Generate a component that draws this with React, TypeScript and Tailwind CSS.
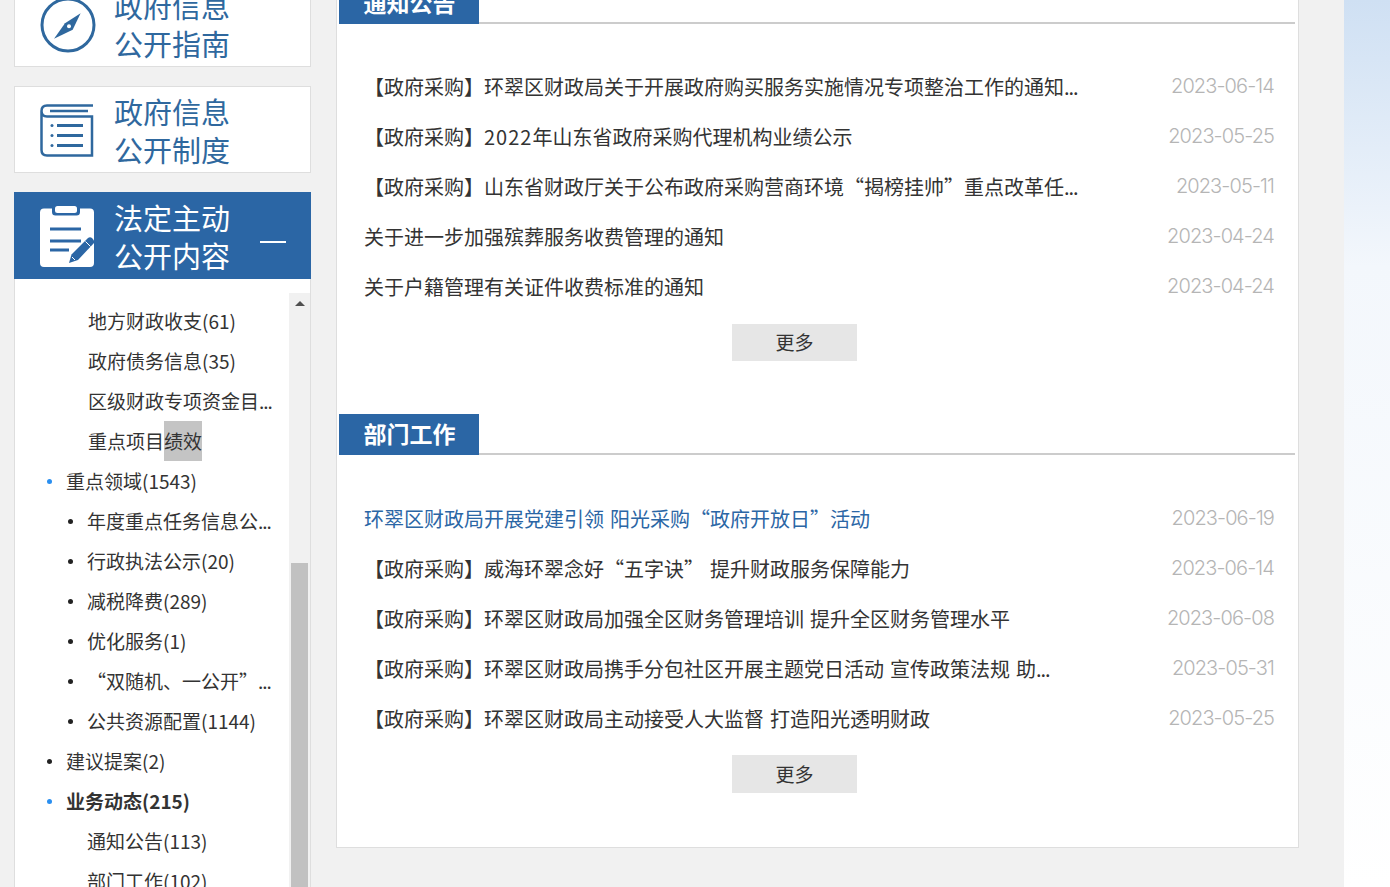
import React from 'react';

const cjk = "font-['Noto_Sans_CJK_SC','Noto_Sans',sans-serif]";

function CompassIcon() {
  return (
    <svg width="56" height="56" viewBox="0 0 56 56" className="shrink-0 mt-[2px]">
      <circle cx="28" cy="28" r="26" fill="none" stroke="#2f689e" strokeWidth="3" />
      <path d="M40.600 16.200 L32.700 32.800 L14 41.800 L25 26.200 Z" fill="#2f689e" />
      <circle cx="29" cy="29.200" r="2" fill="#fff" />
    </svg>
  );
}

function ListBookIcon() {
  return (
    <svg width="54" height="54" viewBox="0 0 54 54" className="shrink-0 mt-[2px]">
      <path d="M53 1.500 H7 Q1.500 1.500 1.500 7 V46 Q1.500 51.500 7 51.500 H52 V12.500 H7 Q1.500 12.500 1.500 7" fill="none" stroke="#2f689e" strokeWidth="2.500" />
      <path d="M10 7 H48" stroke="#2f689e" strokeWidth="2.500" />
      <path d="M17 21.500 H43 M17 31.500 H43 M17 41.500 H43" stroke="#2f689e" strokeWidth="3" />
      <circle cx="12" cy="21.500" r="1.500" fill="#2f689e" />
      <circle cx="12" cy="31.500" r="1.500" fill="#2f689e" />
      <circle cx="12" cy="41.500" r="1.500" fill="#2f689e" />
    </svg>
  );
}

function ClipboardIcon() {
  return (
    <svg width="54" height="62" viewBox="0 0 54 62" className="shrink-0 mt-[3px]">
      <path d="M4 2.500 H12 V6 Q12 9.500 15.500 9.500 H36.500 Q40 9.500 40 6 V2.500 H50 Q54 2.500 54 6.500 V57 Q54 61 50 61 H4 Q0 61 0 57 V6.500 Q0 2.500 4 2.500 Z" fill="#fff" />
      <rect x="15" y="0" width="22" height="7" rx="2.500" fill="#fff" />
      <path d="M10 23 H41 M10 35 H41 M10 44 H29" stroke="#2b66a5" strokeWidth="3" />
      <path d="M29 57 L31.500 48.500 L48 32 Q50 30.500 52 32 L54 34.500 V37 L38 54 Z" fill="#2b66a5" />
      <path d="M45.500 35.500 L50.500 40.500" stroke="#fff" strokeWidth="1" />
      <path d="M32 51 L35 54" stroke="#fff" strokeWidth="1" />
    </svg>
  );
}

function NavCard({ icon, lines, active, trailing }: { icon: React.ReactNode; lines: string[]; active?: boolean; trailing?: boolean }) {
  return (
    <div
      className={
        active
          ? 'h-[87px] flex items-center pl-[26px] bg-[#2b66a5] text-white'
          : 'h-[87px] flex items-center pl-[25px] bg-white border border-[#dedede] text-[#2f689e]'
      }
    >
      <div className="w-[55px] flex">{icon}</div>
      <div className="ml-[19px] text-[29px] leading-[38px]">
        {lines.map((l) => (
          <div key={l}>{l}</div>
        ))}
      </div>
      {trailing && <div className="ml-auto mr-[25px] mt-[12px] w-[26px] h-[2px] bg-white" />}
    </div>
  );
}

// the cut-off marker is a bit narrower in the original font
const More = () => <span className="tracking-[-1px]">...</span>;

type Row = { text: React.ReactNode; level: 1 | 2; dot?: 'blue' | 'black'; bold?: boolean; indent?: boolean };

const treeRows: Row[] = [
  { text: '地方财政收支(61)', level: 2, indent: true },
  { text: '政府债务信息(35)', level: 2, indent: true },
  { text: <>区级财政专项资金目<More /></>, level: 2, indent: true },
  {
    text: (
      <>
        重点项目<span className="inline-block h-[40px] align-top bg-[#c4c4c4]">绩效</span>
      </>
    ),
    level: 2,
    indent: true,
  },
  { text: '重点领域(1543)', level: 1, dot: 'blue' },
  { text: <>年度重点任务信息公<More /></>, level: 2, dot: 'black' },
  { text: '行政执法公示(20)', level: 2, dot: 'black' },
  { text: '减税降费(289)', level: 2, dot: 'black' },
  { text: '优化服务(1)', level: 2, dot: 'black' },
  { text: <>“双随机、一公开”<More /></>, level: 2, dot: 'black' },
  { text: '公共资源配置(1144)', level: 2, dot: 'black' },
  { text: '建议提案(2)', level: 1, dot: 'black' },
  { text: '业务动态(215)', level: 1, dot: 'blue', bold: true },
  { text: '通知公告(113)', level: 2 },
  { text: '部门工作(102)', level: 2 },
];

function TreeRow({ row }: { row: Row }) {
  return (
    <div
      className={
        'h-[40px] flex items-start text-[19px] text-[#333] whitespace-nowrap ' +
        (row.level === 1 ? 'pl-[51px]' : row.indent ? 'pl-[73px]' : 'pl-[72px]') +
        (row.bold ? ' font-bold' : '')
      }
    >
      <span className="w-[20px] -ml-[20px] flex self-center">
        {row.dot === 'blue' && <span className="ml-[1px] w-[5px] h-[5px] rounded-full bg-[#2a8ff0]" />}
        {row.dot === 'black' && <span className="ml-[1px] w-[5px] h-[5px] rounded-full bg-[#222]" />}
      </span>
      <span className="block leading-[39px]">{row.text}</span>
    </div>
  );
}

function Sidebar() {
  return (
    <aside className="w-[297px] shrink-0 -mt-[20px] flex flex-col">
      <NavCard icon={<CompassIcon />} lines={['政府信息', '公开指南']} />
      <div className="h-[19px]" />
      <NavCard icon={<ListBookIcon />} lines={['政府信息', '公开制度']} />
      <div className="h-[19px]" />
      <NavCard icon={<ClipboardIcon />} lines={['法定主动', '公开内容']} active trailing />
      <div className="flex-1 bg-white border-x border-[#dedede] pt-[14px] flex">
        <div className="w-[274px] pt-[8px]">
          {treeRows.map((r, i) => (
            <TreeRow key={i} row={r} />
          ))}
        </div>
        <div className="w-[21px] bg-[#f1f1f1] flex flex-col items-center">
          <div className="mt-[8px] w-0 h-0 border-x-[5px] border-x-transparent border-b-[5px] border-b-[#505050]" />
          <div className="mt-[257px] w-[17px] h-[400px] bg-[#c1c1c1]" />
        </div>
      </div>
    </aside>
  );
}

type Item = { title: React.ReactNode; date: string; link?: boolean };

const noticeItems: Item[] = [
  { title: <>【政府采购】环翠区财政局关于开展政府购买服务实施情况专项整治工作的通知<More /></>, date: '2023-06-14' },
  {
    title: (
      <>
        【政府采购】<span className="tracking-[1px]">2022</span>年山东省政府采购代理机构业绩公示
      </>
    ),
    date: '2023-05-25',
  },
  { title: <>【政府采购】山东省财政厅关于公布政府采购营商环境“揭榜挂帅”重点改革任<More /></>, date: '2023-05-11' },
  { title: '关于进一步加强殡葬服务收费管理的通知', date: '2023-04-24' },
  { title: '关于户籍管理有关证件收费标准的通知', date: '2023-04-24' },
];

const workItems: Item[] = [
  { title: '环翠区财政局开展党建引领 阳光采购“政府开放日”活动', date: '2023-06-19', link: true },
  { title: '【政府采购】威海环翠念好“五字诀” 提升财政服务保障能力', date: '2023-06-14' },
  { title: '【政府采购】环翠区财政局加强全区财务管理培训 提升全区财务管理水平', date: '2023-06-08' },
  { title: <>【政府采购】环翠区财政局携手分包社区开展主题党日活动 宣传政策法规 助<More /></>, date: '2023-05-31' },
  { title: '【政府采购】环翠区财政局主动接受人大监督 打造阳光透明财政', date: '2023-05-25' },
];

function Section({ title, items, listGap, moreTop, moreH }: { title: string; items: Item[]; listGap: string; moreTop: string; moreH: string }) {
  return (
    <section>
      <div className="ml-[2px] mr-[3px] border-b-2 border-[#ccc] h-[41px]">
        <div className="w-[140px] h-[41px] pl-[1px] bg-[#2b66a5] text-white text-[23px] leading-[39px] font-bold text-center">{title}</div>
      </div>
      <div className={listGap + ' pl-[27px] pr-[24px]'}>
        {items.map((it, i) => (
          <div key={i} className="h-[50px] flex items-center justify-between">
            <span className={'text-[20px] whitespace-nowrap [word-spacing:1.5px] ' + (it.link ? 'text-[#2b66a5]' : 'text-[#333]')}>{it.title}</span>
            <span className="font-['Inter',sans-serif] font-light text-[20px] tracking-[-0.9px] text-[#b5b5b5] -mt-[2px]">{it.date}</span>
          </div>
        ))}
      </div>
      <div className={moreTop + ' ' + moreH + ' ml-[395px] w-[125px] bg-[#e6e6e6] flex items-center justify-center text-[19px] text-[#333]'}>更多</div>
    </section>
  );
}

export default function App() {
  return (
    <div className={'h-[887px] w-[1390px] overflow-hidden flex bg-[#f1f1f1] ' + cjk}>
      <div className="w-[1344px] shrink-0 flex items-start pl-[14px]">
        <Sidebar />
        <main className="ml-[25px] w-[963px] -mt-[17px] bg-white border-x border-b border-[#dedede]">
          <Section title="通知公告" items={noticeItems} listGap="mt-[38px]" moreTop="mt-[12px]" moreH="h-[37px]" />
          <div className="h-[53px]" />
          <Section title="部门工作" items={workItems} listGap="mt-[39px]" moreTop="mt-[11px]" moreH="h-[38px]" />
          <div className="h-[54px]" />
        </main>
      </div>
      <div className="flex-1 bg-gradient-to-b from-[#cfe0f3] via-[#f3f7fc] via-[30%] to-white" />
    </div>
  );
}
